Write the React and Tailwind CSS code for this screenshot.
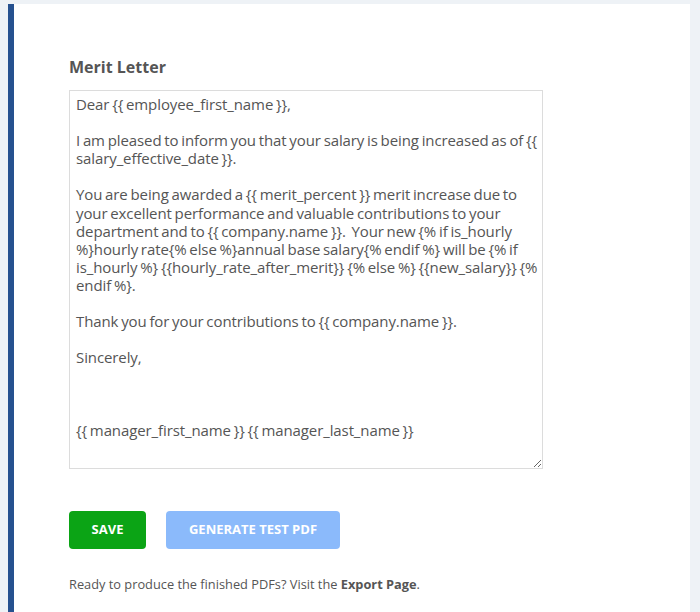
import React from 'react';

// line breaks kept as they fall in the editor
const letter = [
    'Dear {{ employee_first_name }},',
    '',
    'I am pleased to inform you that your salary is being increased as of {{',
    'salary_effective_date }}.',
    '',
    'You are being awarded a {{ merit_percent }} merit increase due to',
    'your excellent performance and valuable contributions to your',
    'department and to {{ company.name }}.  Your new {% if is_hourly',
    '%}hourly rate{% else %}annual base salary{% endif %} will be {% if',
    'is_hourly %} {{hourly_rate_after_merit}} {% else %} {{new_salary}} {%',
    'endif %}.',
    '',
    'Thank you for your contributions to {{ company.name }}.',
    '',
    'Sincerely,',
    '',
    '',
    '',
    '{{ manager_first_name }} {{ manager_last_name }}',
].join('\n');

const App = () => {
    return (
        <div className="w-[700px] h-[612px] bg-[#eef2f6] pt-[4px] pl-[8px] pr-[10px] overflow-hidden" style={{ fontFamily: '"Open Sans", Lato, sans-serif' }}>
            <div className="h-full bg-white border-l-[6px] border-[#26518f] pl-[55px] pt-[52px]">
                <h2 className="text-[16px] font-bold text-[#555] leading-[22px] mb-[12px]">Merit Letter</h2>
                <textarea
                    wrap="off"
                    className="block w-[474px] h-[379px] border border-[#dcdcdc] pl-[6px] pr-[2px] pt-[4px] pb-[5px] text-[15px] leading-[18.1px] tracking-[-0.1px] [word-spacing:-1px] text-[#555] outline-none resize-y overflow-hidden"
                    defaultValue={letter}
                />
                <div className="flex gap-[20px] mt-[42px]">
                    <button className="h-[38px] w-[77px] rounded-[4px] bg-[#0ba415] text-white text-[13px] font-bold">
                        SAVE
                    </button>
                    <button className="h-[38px] w-[174px] rounded-[4px] bg-[#8bbafb] text-white text-[13px] font-bold">
                        GENERATE TEST PDF
                    </button>
                </div>
                <p className="mt-[26px] text-[12.8px] text-[#555]">
                    Ready to produce the finished PDFs? Visit the <span className="font-bold">Export Page</span>.
                </p>
            </div>
        </div>
    );
};

export default App;
